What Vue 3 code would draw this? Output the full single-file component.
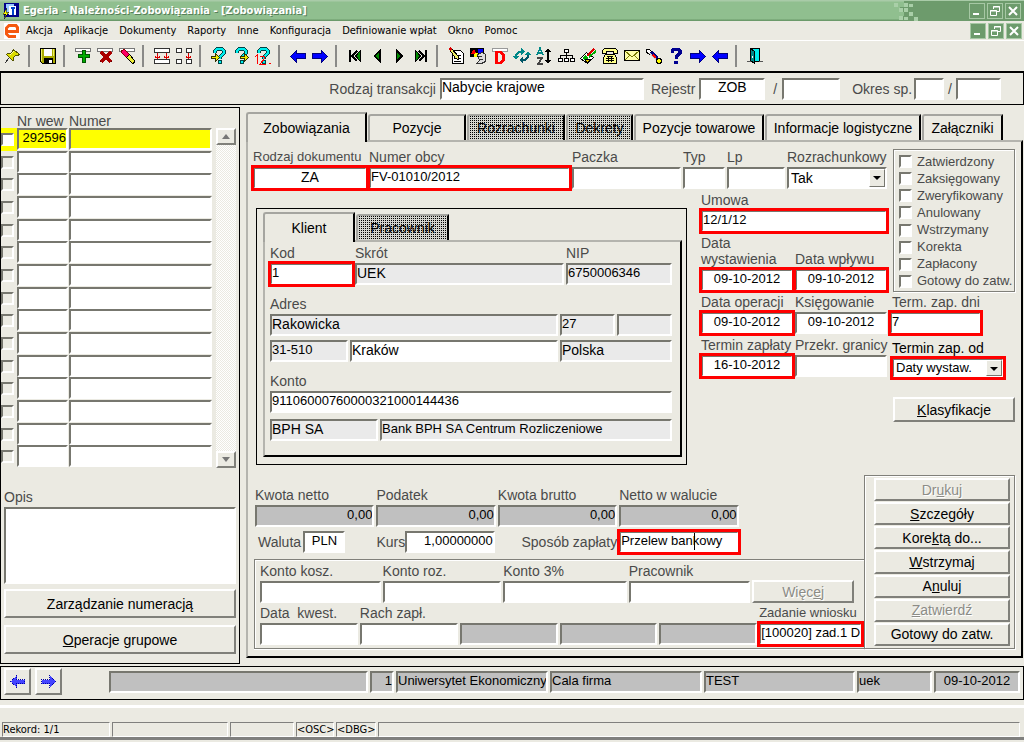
<script setup>
import { ref } from 'vue'

const menu = ['Akcja', 'Aplikacje', 'Dokumenty', 'Raporty', 'Inne', 'Konfiguracja', 'Definiowanie wpłat', 'Okno', 'Pomoc']

const arrowL = '<path fill="#00f" stroke="#000080" d="M1.5 9.5 7.5 3.5v3h9v5h-9v4z"/>'
const arrowR = '<path fill="#00f" stroke="#000080" d="M16.500 9.500 10.500 3.500v3h-9v5h9v4z"/>'
const slot = '<path fill="#fff" stroke="#777" d="M1.500 1.500h15v3h-15z"/>'
const query = '<path fill="none" stroke="#044" stroke-width="4" d="M5 6V4l2-2h5l2 2v2l-4 4v2"/><path fill="none" stroke="#0ee" stroke-width="2.500" d="M5 6V4l2-2h5l2 2v2l-4 4v2"/><path fill="#0ee" stroke="#044" d="M8.500 13.500h3v3h-3z"/>'

const groups = [
  [{ n: 'Przypnij', s: '<path fill="#dd0" stroke="#550" d="M9.500 2.500l6 5-2 1-2 0-2 2 0 3-1 0-6-6 1-1h3l2-2z"/><path stroke="#333" d="M5 11l-4 5"/><path stroke="#ffa" d="M6 8l4-4"/>' }],
  [{ n: 'Zapisz', s: '<path fill="#aa0" stroke="#000" d="M1.500 1.500h15v15h-13l-2-2z"/><path fill="#fff" d="M5 2h8v7H5z"/><path fill="#000" d="M5 11h9v6H5z"/><path fill="#fff" d="M10 13h3v3h-3z"/><path stroke="#ee6" d="M2.500 2v12M14.500 2v7"/>' }],
  [
    { n: 'Dodaj', s: slot + '<path fill="#0a0" stroke="#050" d="M8.500 3.500h3v4h4v3h-4v5h-3v-5h-4v-3h4z"/>' },
    { n: 'Usuń', s: slot + '<path stroke="#a00" stroke-width="3" d="M5 5l10 10M15 5L5 15"/><path stroke="#500" d="M5 15l-1-1M15 15l1-1"/>' },
    { n: 'Wyczyść', s: slot + '<path fill="#f06" stroke="#800" d="M3.500 3.500l3-1 5 5-3 3-5-5z"/><path fill="#ee3" stroke="#000" d="M11.500 7.500l5 6v2l-2 1-6-6z"/>' },
  ],
  [
    { n: 'Wprowadź zapytanie', s: '<path fill="#fff" stroke="#333" d="M1.500 1.500h15v4h-15zM1.500 12.500h15v4h-15z"/><path fill="none" stroke="#d00" d="M4.500 6v6M13.500 6v6M2 9.500l2.500 2 2.500-2M11 9.500l2.500 2 2.500-2"/>' },
    { n: 'Powiel pole', s: '<path fill="#fff" stroke="#333" d="M1.500 1.500h5v4h-5zM11.500 1.500h5v4h-5zM1.500 12.500h5v4h-5zM11.500 12.500h5v4h-5z"/><path fill="none" stroke="#d00" d="M13.500 6v6M11 9.500l2.500 2 2.500-2"/>' },
  ],
  [
    { n: 'Pytaj', s: query + '<path fill="#ee0" stroke="#330" d="M1.500 9.500h4v-3l4 4-4 4v-3h-4z"/>' },
    { n: 'Wykonaj', s: query + '<path fill="#ee0" stroke="#330" d="M8.500 9.500h4v-3l4 4-4 4v-3h-4z"/>' },
    { n: 'Policz', s: query + '<path fill="none" stroke="#f00" d="M1 10l2-2v9M6 10l2-1h2l1 2-5 6h6M15 16h2"/>' },
  ],
  [{ n: 'Wstecz', s: arrowL }, { n: 'Naprzód', s: arrowR }],
  [
    { n: 'Pierwszy', s: '<path fill="none" stroke="#000" stroke-width="2" d="M4 3v12M11 4L6 9l5 5"/><path fill="#080" stroke="#000" d="M14.500 3.500v11l-5-5.500z"/>' },
    { n: 'Poprzedni', s: '<path fill="#080" stroke="#000" stroke-width="1.500" d="M12 3.500v11L6.500 9z"/>' },
    { n: 'Następny', s: '<path fill="#080" stroke="#000" stroke-width="1.500" d="M6.500 3.500v11L12 9z"/>' },
    { n: 'Ostatni', s: '<path fill="none" stroke="#000" stroke-width="2" d="M14 3v12M7 4l5 5-5 5"/><path fill="#080" stroke="#000" d="M3.500 3.500v11l5-5.500z"/>' },
  ],
  [
    { n: 'Edytuj', s: '<path fill="#fff" stroke="#000" d="M5.500 3.500h8l3 3v10h-11z"/><path stroke="#000" d="M7 11.500h7M9 8.500h5M7 14.500h7"/><path fill="#ee6" stroke="#000" d="M2.500 2.500l2-1 7 8v3l-3-1z"/><path fill="#d00" d="M1 2l2-2 2 2-2 2z"/>' },
    { n: 'Kształty', s: '<path fill="#000" d="M1 1h14v9H1z"/><path fill="#00f" d="M9 2h5v4H9z"/><path fill="#f00" d="M2 7l3-5 3 5z"/><circle fill="#ff0" cx="7" cy="8" r="2"/><path fill="#ddd" stroke="#333" d="M8.500 7.500l5-2 3 2v7l-4 2h-5l3-3z"/><path stroke="#333" d="M10 10l3-1M11 13l3-1"/>' },
    { n: 'Dekret', s: '<path fill="#fff" stroke="#999" d="M1.500 1.500h15v3h-15z"/><path fill="none" stroke="#f00" stroke-width="2.500" d="M5.500 5h4l3 3v5l-3 3h-4z"/>' },
    { n: 'Odśwież', s: '<path fill="none" stroke="#088" stroke-width="2" d="M3 12V8l3-3h3"/><path fill="#088" d="M8 1v7l4-4z"/><path fill="none" stroke="#056" stroke-width="2" d="M15 6v4l-3 3H9"/><path fill="#056" d="M10 10v7l-4-4z"/><path fill="#088" d="M0 9h6l-3 4zM12 8h6l-3-4z"/>' },
    { n: 'Sortuj', s: '<path fill="none" stroke="#088" stroke-width="1.500" d="M2 8l3-7 3 7M3 6h4"/><path fill="none" stroke="#444" stroke-width="1.500" d="M2 11h5l-4 6h5"/><path stroke="#000" stroke-width="1.500" d="M13 2v14"/><path d="M10 5l3-4 3 4zM10 13l3 4 3-4z"/>' },
    { n: 'Drzewo', s: '<path fill="#fff" stroke="#000" d="M7.500 2.500h4v3h-4zM1.500 11.500h4v3h-4zM7.500 11.500h4v3h-4zM13.500 11.500h4v3h-4z"/><path fill="none" stroke="#000" d="M9.500 6v5M3.500 11V8.500h12V11"/>' },
    { n: 'Podpisz', s: '<path fill="#fff" stroke="#000" d="M1.500 11.500l6-6 7 5-6 6z"/><path fill="#0a0" d="M3 11l3-3 3 3-3 3z"/><path fill="#ec0" stroke="#000" d="M6 13l3-1 3 1-4 3z"/><path stroke="#d00" stroke-width="2" d="M8 9l7-7"/><path stroke="#0a0" stroke-width="2" d="M10 10l7-6"/>' },
    { n: 'Telefon', s: '<path fill="#ff8" stroke="#000" d="M1.500 6.500v-3l2-2h11l2 2v3h-4v-2h-7v2zM4.500 7.500h9l2 3v6h-13v-6z"/><path fill="none" stroke="#000" d="M6 9.500h6M5 11.500h8M5 13.500h8M7.500 9v6M10.500 9v6"/>' },
    { n: 'Poczta', s: '<path fill="#ffa" stroke="#000" d="M1.500 3.500h15v10h-15z"/><path fill="none" stroke="#770" d="M2 4l7 6 7-6M2 13l5-5M16 13l-5-5"/>' },
    { n: 'Kolory', s: '<path fill="#fff" stroke="#000" d="M1.500 2.500h3l3 3-2 2-4-2z"/><path stroke="#000080" stroke-width="4" d="M6 5l7 8"/><path stroke="#ccc" stroke-width="1.500" d="M5 6l7 8"/><path stroke="#f00" stroke-width="2" d="M8 8l3 3"/><path stroke="#000" stroke-width="4" d="M14 11v6M11 14h6"/><path stroke="#ff0" stroke-width="2" d="M14 12v4M12 14h4"/>' },
    { n: 'Pomoc', s: '<path fill="none" stroke="#000090" stroke-width="3" d="M5 6V3.500L7 2h4l2 2v2l-4 4v2"/><path fill="#000090" d="M7 14h4v3H7z"/>' },
    { n: 'Dalej', s: arrowR },
    { n: 'Cofnij', s: arrowL },
  ],
  [{ n: 'Wyjście', s: '<path fill="#0ee" stroke="#000" d="M4.500 1.500h9v13h-9z"/><path fill="#088" stroke="#000" d="M4.500 1.500l4 3v12l-4-3z"/><path fill="#fff" d="M6 9h1v2H6z"/><path stroke="#555" d="M1 14.500h4M13 14.500h4"/>' }],
]

const tabs = [
  { t: 'Zobowiązania', c: 'w1 active' }, { t: 'Pozycje', c: 'w2' }, { t: 'Rozrachunki', c: 'w3 off' },
  { t: 'Dekrety', c: 'w4 off' }, { t: 'Pozycje towarowe', c: 'w5' }, { t: 'Informacje logistyczne', c: 'w6' }, { t: 'Załączniki', c: 'w7' },
]
const flags = ['Zatwierdzony', 'Zaksięgowany', 'Zweryfikowany', 'Anulowany', 'Wstrzymany', 'Korekta', 'Zapłacony', 'Gotowy do zatw.']
const amounts = ['Kwota netto', 'Podatek', 'Kwota brutto', 'Netto w walucie']
const actions = [
  ['Dr', 'u', 'kuj', true], ['', 'S', 'zczegóły'], ['Kore', 'k', 'tą do...'], ['', 'W', 'strzymaj'],
  ['A', 'n', 'uluj'], ['', 'Z', 'atwierdź', true], ['Gotowy do zatw.', '', ''],
]
const rows = Array.from({ length: 15 }, (_, i) => ({ nr: i === 0 ? '292596' : '', numer: '' }))
const opis = ref('')
</script>

<template>
  <div class="app">
    <header class="title">
      <svg class="appicon" viewBox="0 0 16 16" shape-rendering="crispEdges">
        <path fill="#008" d="M1 0h15v14H1z" /><path fill="#9cf" d="M3 1h8v10H3z" /><path fill="#fff" d="M6 3h7v9H6z" />
        <path fill="#04c" d="M8 4h4v2H8zM9 6h2v6H9z" /><path fill="#ff0" stroke="#000" stroke-width=".5" d="M4 5L0 11h3l-2 5 5-7H3z" />
      </svg>
      <h1>Egeria - Należności-Zobowiązania - [Zobowiązania]</h1>
      <svg class="pixels" viewBox="0 0 26 20" shape-rendering="crispEdges">
        <path fill="#6d9b6c" d="M10 0h16v20H10zM6 6h4v5H6zM6 15h4v5H6z" />
        <path fill="#a9cfa8" d="M0 2h4v4H0zM5 7h4v4H5zM10 2h4v4h-4zM15 3h4v3h-4zM10 7h4v4h-4zM15 11h4v4h-4zM5 15h4v4H5zM10 16h4v3h-4zM20 16h4v4h-4z" />
      </svg>
      <div class="winbtns">
        <button aria-label="Minimalizuj"><svg viewBox="0 0 14 14"><path fill="#fff" d="M3 9h6v2H3z" /></svg></button>
        <button aria-label="Przywróć"><svg viewBox="0 0 14 14"><path fill="none" stroke="#fff" d="M5.500 5V2.500h6v5H9M2.500 6.500h6v5h-6zM5 3h7M2 7h7" /></svg></button>
        <button aria-label="Zamknij"><svg viewBox="0 0 14 14"><path stroke="#fff" stroke-width="2" d="M3 3l8 8M11 3l-8 8" /></svg></button>
      </div>
    </header>

    <nav class="menu">
      <svg class="logo" viewBox="0 0 16 16"><path fill="#fff" d="M0 0h16v16H0z" /><path fill="none" stroke="#f5590f" stroke-width="3" d="M3 8.500h10.500V4.500L12 2.500H5L2.500 5v6L5 13.500h7" /></svg>
      <a v-for="m in menu" :key="m" href="#">{{ m }}</a>
      <div class="winbtns">
        <button aria-label="Minimalizuj okno"><svg viewBox="0 0 14 14"><path fill="#fff" d="M3 9h6v2H3z" /></svg></button>
        <button aria-label="Przywróć okno"><svg viewBox="0 0 14 14"><path fill="none" stroke="#fff" d="M5.500 5V2.500h6v5H9M2.500 6.500h6v5h-6zM5 3h7M2 7h7" /></svg></button>
        <button aria-label="Zamknij okno"><svg viewBox="0 0 14 14"><path stroke="#fff" stroke-width="2" d="M3 3l8 8M11 3l-8 8" /></svg></button>
      </div>
    </nav>

    <div class="toolbar">
      <div v-for="(g, i) in groups" :key="i" class="tgroup">
        <button v-for="b in g" :key="b.n" :aria-label="b.n"><svg viewBox="0 0 18 18" shape-rendering="crispEdges" v-html="b.s"></svg></button>
      </div>
    </div>

    <section class="trans">
      <label for="rt">Rodzaj transakcji</label><input id="rt" class="i tx" value="Nabycie krajowe">
      <label for="rej">Rejestr</label><input id="rej" class="i tx c rej" value="ZOB">
      <span>/</span><input class="i rej2" aria-label="Rejestr numer">
      <label for="okr" class="okr">Okres sp.</label><input id="okr" class="i ok1">
      <span class="tight">/</span><input class="i ok2" aria-label="Okres rok">
    </section>

    <main>
      <aside>
        <div class="list">
          <table>
            <thead><tr><th></th><th>Nr wew</th><th>Numer</th></tr></thead>
            <tbody>
              <tr v-for="(r, i) in rows" :key="i" :class="{ sel: i === 0 }">
                <td class="ck"><input type="checkbox" class="cb" :aria-label="'Wiersz ' + (i + 1)"></td>
                <td class="nr"><input class="i r" :value="r.nr" aria-label="Nr wew"></td>
                <td><input class="i" :value="r.numer" aria-label="Numer"></td>
              </tr>
            </tbody>
          </table>
          <div class="scroll">
            <button class="b" aria-label="W górę"><svg viewBox="0 0 8 5"><path fill="#777" d="M4 0l4 5H0z" /></svg></button>
            <button class="b" aria-label="W dół"><svg viewBox="0 0 8 5"><path fill="#777" d="M0 0h8L4 5z" /></svg></button>
          </div>
        </div>
        <label for="opis" class="opis">Opis</label>
        <textarea id="opis" v-model="opis" class="i"></textarea>
        <button class="b big">Zarządzanie numeracją</button>
        <button class="b big"><u>O</u>peracje grupowe</button>
      </aside>

      <section class="right">
        <div class="tabs"><button v-for="t in tabs" :key="t.t" class="tab" :class="t.c">{{ t.t }}</button></div>
        <div class="panel">
          <div class="top">
            <div class="topleft">
              <div class="row1">
                <div class="f"><label for="rd" class="sm">Rodzaj dokumentu</label><input id="rd" class="i c tx req" value="ZA"></div>
                <div class="f"><label for="no">Numer obcy</label><input id="no" class="i req" value="FV-01010/2012"></div>
                <div class="f"><label for="pa">Paczka</label><input id="pa" class="i"></div>
                <div class="f"><label for="ty">Typ</label><input id="ty" class="i"></div>
                <div class="f"><label for="lp">Lp</label><input id="lp" class="i"></div>
                <div class="f"><label for="ro">Rozrachunkowy</label>
                  <div class="sel-wrap"><select id="ro" class="i tx"><option>Tak</option></select><span class="arr"></span></div>
                </div>
              </div>
              <div class="mid">
                <div class="client">
                  <div class="tabs sub"><button class="tab active k1">Klient</button><button class="tab off k2">Pracownik</button></div>
                  <div class="panel cp">
                    <div class="g1">
                      <div class="f"><label for="kod">Kod</label><input id="kod" class="i req" value="1"></div>
                      <div class="f"><label for="skr">Skrót</label><input id="skr" class="i tx g" value="UEK" readonly></div>
                      <div class="f"><label for="nip">NIP</label><input id="nip" class="i g" value="6750006346" readonly></div>
                    </div>
                    <label for="adr" class="lab">Adres</label>
                    <div class="g2">
                      <input id="adr" class="i tx g" value="Rakowicka" readonly><input class="i g" value="27" aria-label="Nr domu" readonly><input class="i g" aria-label="Nr lokalu" readonly>
                    </div>
                    <div class="g3">
                      <input class="i g" value="31-510" aria-label="Kod pocztowy" readonly><input class="i tx" value="Kraków" aria-label="Miasto"><input class="i tx g" value="Polska" aria-label="Kraj" readonly>
                    </div>
                    <label for="kon" class="lab">Konto</label>
                    <input id="kon" class="i" value="91106000760000321000144436">
                    <div class="g4"><input class="i tx g" value="BPH SA" aria-label="Bank" readonly><input class="i g" value="Bank BPH SA Centrum Rozliczeniowe" aria-label="Nazwa banku" readonly></div>
                  </div>
                </div>
                <div class="dates">
                  <div class="f wide"><label for="um">Umowa</label><input id="um" class="i req" value="12/1/12"></div>
                  <div class="f"><label for="dw">Data<br>wystawienia</label><input id="dw" class="i c req" value="09-10-2012"></div>
                  <div class="f"><label for="dp">Data wpływu</label><input id="dp" class="i c req" value="09-10-2012"></div>
                  <div class="f"><label for="do">Data operacji</label><input id="do" class="i c req" value="09-10-2012"></div>
                  <div class="f"><label for="ks">Księgowanie</label><input id="ks" class="i c" value="09-10-2012"></div>
                  <div class="f"><label for="tz">Termin zapłaty</label><input id="tz" class="i c req" value="16-10-2012"></div>
                  <div class="f"><label for="pg">Przekr. granicy</label><input id="pg" class="i c"></div>
                </div>
              </div>
            </div>
            <div class="topright">
              <div class="flags"><label v-for="f in flags" :key="f"><input type="checkbox" class="cb">{{ f }}</label></div>
              <div class="f dni"><label for="td">Term. zap. dni</label><input id="td" class="i req" value="7"></div>
              <div class="f od"><label for="to">Termin zap. od</label>
                <div class="sel-wrap"><select id="to" class="i req"><option>Daty wystaw.</option></select><span class="arr"></span></div>
              </div>
              <button class="b klas"><u>K</u>lasyfikacje</button>
            </div>
          </div>

          <div class="bottom">
            <div class="bleft">
              <div class="money">
                <div v-for="(a, i) in amounts" :key="a" class="f"><label :for="'am' + i">{{ a }}</label><input :id="'am' + i" class="i r dk" value="0,00" readonly></div>
              </div>
              <div class="money second">
                <div class="in"><label for="wal">Waluta</label><input id="wal" class="i c wal" value="PLN"></div>
                <div class="in"><label for="kur">Kurs</label><input id="kur" class="i r kurs" value="1,00000000"></div>
                <label for="spo" class="spo">Sposób zapłaty</label>
                <div class="caretbox"><input id="spo" class="i req" value="Przelew bankowy"><i class="caret"></i></div>
              </div>
              <div class="group">
                <div class="q1">
                  <div class="f"><label for="kk">Konto kosz.</label><input id="kk" class="i"></div>
                  <div class="f"><label for="kr">Konto roz.</label><input id="kr" class="i"></div>
                  <div class="f"><label for="k3">Konto 3%</label><input id="k3" class="i"></div>
                  <div class="f"><label for="pr">Pracownik</label><input id="pr" class="i"></div>
                  <button class="b" disabled>Więc<u>e</u>j</button>
                </div>
                <div class="q2">
                  <div class="f"><label for="dk">Data&nbsp; kwest.</label><input id="dk" class="i"></div>
                  <div class="f"><label for="rz">Rach zapł.</label><input id="rz" class="i"></div>
                  <input v-for="n in 3" :key="n" class="i dk" :aria-label="'Pole ' + n" readonly>
                  <div class="f"><label for="zw" class="sm">Zadanie wniosku</label><input id="zw" class="i req" value="[100020] zad.1 D"></div>
                </div>
              </div>
            </div>
            <div class="actions">
              <button v-for="a in actions" :key="a[2] + a[0]" class="b" :disabled="a[3]">{{ a[0] }}<u>{{ a[1] }}</u>{{ a[2] }}</button>
            </div>
          </div>
        </div>
      </section>
    </main>

    <section class="foot">
      <button class="b" aria-label="Poprzedni formularz"><svg viewBox="0 0 15 13" shape-rendering="crispEdges"><path fill="#44f" stroke="#00a" stroke-dasharray="1 1" d="M.5 6.500l6-6v4h8v4h-8v4z" /></svg></button>
      <button class="b" aria-label="Następny formularz"><svg viewBox="0 0 15 13" shape-rendering="crispEdges"><path fill="#44f" stroke="#00a" stroke-dasharray="1 1" d="M14.500 6.500l-6-6v4h-8v4h8v4z" /></svg></button>
      <div class="ff">
        <input class="i dk" aria-label="Komunikat" readonly><input class="i dk r" value="1" aria-label="Numer firmy" readonly>
        <input class="i dk" value="Uniwersytet Ekonomiczny" aria-label="Firma" readonly><input class="i dk" value="Cala firma" aria-label="Oddział" readonly>
        <input class="i dk" value="TEST" aria-label="Baza" readonly><input class="i dk" value="uek" aria-label="Użytkownik" readonly>
        <input class="i dk c" value="09-10-2012" aria-label="Data" readonly>
      </div>
    </section>

    <footer class="status"><span>Rekord: 1/1</span><span></span><span></span><span>&lt;OSC&gt;</span><span>&lt;DBG&gt;</span><span></span></footer>
    <div class="edge"><i></i><i></i></div>
  </div>
</template>

<style>
html, body { background: #ebeae2; }
</style>

<style scoped>
* { box-sizing: border-box; }
.app { min-height: 100vh; min-width: 960px; display: flex; flex-direction: column; background: #ebeae2; color: #000; font: 14px/16px "Liberation Sans", Arial, sans-serif; overflow: hidden; }
button, input, select, textarea { font: inherit; color: inherit; border-radius: 0; margin: 0; outline: none; }
label { color: #4a4a4a; white-space: nowrap; }
.sm { font-size: 13px; }

.title { height: 21px; display: flex; align-items: center; background: linear-gradient(#a9cba8 0 1px, #90bf8f 2px 19px, #6b9a6a 20px); padding-left: 3px; flex: none; }
.appicon { width: 16px; height: 16px; }
.title h1 { margin: 0 auto 0 4px; font: bold 11px/16px "DejaVu Sans Condensed", "DejaVu Sans", sans-serif; color: #fff; text-shadow: 1px 1px #56805a; white-space: nowrap; }
.pixels { width: 26px; height: 20px; }
.title .winbtns { background: #6d9b6c; height: 20px; padding: 2px 3px 0 49px; }
.winbtns { display: flex; gap: 2px; padding-right: 2px; }
.winbtns button { width: 16px; height: 16px; padding: 0; border: 1px solid #a6c8a4; background: #6d9b6c; display: block; }
.winbtns svg { display: block; width: 14px; height: 14px; }

.menu { height: 20px; display: flex; align-items: center; border-bottom: 1px solid #fff; padding-left: 4px; font: 11px/16px "DejaVu Sans Condensed", "DejaVu Sans", sans-serif; flex: none; }
.menu a { color: #000; text-decoration: none; margin-right: 11px; white-space: nowrap; }
.logo { width: 16px; height: 16px; margin-right: 6px; }
.menu .winbtns { margin-left: auto; }

.toolbar { height: 30px; display: flex; align-items: center; padding-left: 2px; flex: none; }
.tgroup { display: flex; }
.tgroup + .tgroup { margin-left: 4px; padding-left: 7px; border-left: 2px solid; border-image: linear-gradient(90deg, #8a8a88 50%, #fff 50%) 1; }
.tgroup button { width: 22px; height: 22px; padding: 2px; border: 0; background: none; }
.tgroup svg { display: block; width: 18px; height: 18px; }

.i { width: 100%; height: 22px; min-width: 0; padding: 0 0 3px; border: 2px solid; border-color: #77776f #fff #fff #77776f; background: #fff; font-size: 13px; color: #000; display: block; }
.tx { font-size: 14px; }
.c { text-align: center; }
.r { text-align: right; }
.g { background: #eaeaea; }
.dk { background: #c0c0c0; }
.req { outline: 3px solid #f00; outline-offset: -1px; }
.b { border: 2px solid; border-color: #fff #80807a #80807a #fff; background: #ebeae2; padding: 0; text-align: center; white-space: nowrap; }
.b:disabled { color: #8c8c86; text-shadow: 1px 1px #fff; }
.cb { appearance: none; width: 13px; height: 13px; border: 2px solid; border-color: #77776f #fff #fff #77776f; background: #fff; flex: none; }

.trans { display: flex; align-items: center; justify-content: flex-end; border: 1px solid #000; border-top-width: 2px; height: 34px; padding-right: 22px; flex: none; }
.trans label { margin: 0 4px 0 7px; }
.trans .i { width: 204px; }
.trans .rej { width: 66px; }
.trans .rej2 { width: 58px; }
.trans .ok1 { width: 30px; }
.trans .ok2 { width: 45px; }
.trans span { margin: 0 5px 0 8px; color: #4a4a4a; }
.trans .tight { margin: 0 4px; }
.trans .okr { margin: 0 2px 0 12px; }

main { display: grid; grid-template-columns: 240px minmax(0, 1fr); margin-top: 2px; flex: 1; gap: 6px; }
aside { border: 1px solid #000; padding: 5px 3px 9px 0; display: flex; flex-direction: column; align-items: stretch; }
.list { display: flex; justify-content: space-between; }
table { border-collapse: separate; border-spacing: 0; width: 211px; height: 355px; table-layout: fixed; }
th { font-weight: normal; color: #4a4a4a; text-align: left; padding: 0; height: 15px; line-height: 14px; }
th:first-child { width: 16px; }
th:nth-child(2) { width: 52px; }
td { padding: 0; vertical-align: top; }
.nr { padding-right: 1px; }
.ck { padding-top: 5px; }
.ck .cb { display: block; background: transparent; }
.sel .ck { background: #ff0; }
.sel .ck .cb { background: #fff; }
.sel .i { background: #ff0; }
.scroll { width: 20px; height: 340px; margin-top: 15px; display: flex; flex-direction: column; justify-content: space-between; background: conic-gradient(#fff 25%, #ebeae2 0 50%, #fff 0 75%, #ebeae2 0) 0 0 / 2px 2px; }
.scroll .b { width: 20px; height: 17px; display: flex; align-items: center; justify-content: center; }
.scroll svg { width: 8px; height: 5px; }
.opis { margin: 21px 3px 2px; }
textarea.i { height: auto; flex: 1; width: auto; margin-left: 3px; resize: none; }
.big { height: 29px; margin: 5px 0 0 3px; }
.big + .big { margin-top: 7px; }

.right { display: flex; flex-direction: column; padding-top: 5px; }
.tabs { display: flex; align-items: flex-end; height: 28px; }
.tab { height: 26px; padding: 0; border: 0; border-top: 2px solid #a5a5a0; border-left: 2px solid #a5a5a0; border-right: 2px solid #000; background: #ebeae2; margin-left: 1px; white-space: nowrap; border-radius: 3px 0 0 0; }
.tab.active { height: 30px; margin: 0 0 -2px; position: relative; }
.tab.off { background: conic-gradient(#000 25%, #d4d4ce 0) 0 0 / 2px 2px; }
.w1 { width: 121px; } .w2 { width: 98px; } .w3 { width: 98px; } .w4 { width: 67px; } .w5 { width: 130px; } .w6 { width: 156px; } .w7 { width: 81px; }
.panel { border: 2px solid; border-color: #b4b4ae #000 #000 #b4b4ae; flex: 1; }
.right > .panel { margin-right: 1px; padding-bottom: 7px; display: flex; flex-direction: column; justify-content: space-between; margin-bottom: 6px; }

.top { display: flex; }
.topleft { flex: 1; min-width: 0; padding: 7px 0 0 5px; }
.f { display: flex; flex-direction: column; justify-content: flex-end; gap: 2px; min-width: 0; }
.row1 { display: grid; gap: 2px; grid-template-columns: minmax(0, 114fr) minmax(0, 201fr) minmax(0, 109fr) minmax(0, 42fr) minmax(0, 58fr) minmax(0, 100fr); }
.sel-wrap { position: relative; }
select.i { appearance: none; padding-left: 2px; padding-bottom: 0; }
.arr { position: absolute; top: 2px; right: 2px; bottom: 2px; width: 16px; background: #ebeae2; border: 1px solid; border-color: #fff #77776f #77776f #fff; pointer-events: none; }
.arr::after { content: ""; position: absolute; left: 3px; top: 6px; border: 4px solid transparent; border-top-color: #000; border-bottom: 0; }
.mid { display: grid; grid-template-columns: minmax(0, 431fr) minmax(0, 186fr); column-gap: 14px; padding-left: 3px; }
.client { border: 1px solid #000; margin-top: 19px; padding: 4px 4px 7px 6px; }
.sub { height: 27px; }
.k1 { width: 92px; } .k2 { width: 93px; }
.cp { padding: 3px 8px 14px 5px; }
.cp .lab { display: block; margin: 11px 0 2px; }
.g1, .g2, .g3, .g4 { display: grid; gap: 2px; }
.g1 { grid-template-columns: minmax(0, 83fr) minmax(0, 209fr) minmax(0, 106fr); }
.g2 { grid-template-columns: minmax(0, 288fr) minmax(0, 55fr) minmax(0, 55fr); }
.g3 { grid-template-columns: minmax(0, 78fr) minmax(0, 208fr) minmax(0, 112fr); margin-top: 4px; }
.g4 { grid-template-columns: minmax(0, 108fr) minmax(0, 292fr); margin-top: 6px; }
.dates { display: grid; grid-template-columns: minmax(0, 1fr) minmax(0, 1fr); column-gap: 2px; row-gap: 3px; align-content: start; margin-top: 3px; }
.wide { grid-column: 1 / -1; }

.topright { width: 134px; flex: none; padding: 7px 6px 0; }
.flags { border: 1px solid #80807a; box-shadow: 1px 1px #fff, inset 1px 1px #fff; height: 143px; display: flex; flex-direction: column; padding: 3px 0 1px 5px; }
.flags label { flex: 1; display: flex; align-items: center; gap: 5px; font-size: 13px; }
.dni { width: 91px; margin: 2px 0 0 -3px; }
.dni label, .od label { margin-left: 2px; }
.od label { margin-left: 0; }
.od { margin: 6px 1px 0 -1px; width: 112px; }
.od label { color: #000; }
.od .i { height: 20px; }
.klas { width: 100%; height: 25px; margin-top: 19px; display: block; }

.bottom { display: flex; padding: 0 6px; margin-top: 10px; }
.bleft { flex: 1; min-width: 0; padding-top: 12px; }
.money { display: grid; gap: 2px; padding-left: 1px; grid-template-columns: repeat(4, minmax(0, 120fr)) minmax(0, 124fr); }
.second { margin-top: 4px; align-items: center; }
.in { display: flex; align-items: center; justify-content: space-between; padding-right: 1px; }
.in:first-child { padding: 0 29px 0 3px; }
.in .wal { width: 42px; } .in .kurs { width: 91px; }
.spo { text-align: right; }
.caretbox { position: relative; }
.caret { position: absolute; left: 75px; top: 2px; width: 1px; height: 17px; background: #000; }
.group { border: 1px solid #80807a; border-right: 0; box-shadow: inset 1px 1px #fff, 0 1px #fff; margin-top: 6px; padding: 3px 2px 3px 5px; }
.q1, .q2 { display: grid; gap: 2px; align-items: end; }
.q1 { grid-template-columns: minmax(0, 121fr) minmax(0, 119fr) minmax(0, 124fr) minmax(0, 122fr) minmax(0, 102fr) minmax(0, 6fr); }
.q1 .b { height: 23px; }
.q2 { grid-template-columns: repeat(5, minmax(0, 98fr)) minmax(0, 103fr); margin-top: 2px; }
.actions { width: 151px; border: 1px solid #80807a; box-shadow: inset 1px 1px #fff, 1px 1px #fff; padding: 2px 4px 2px 9px; display: flex; flex-direction: column; gap: 1px; }
.actions .b { flex: 1; line-height: 14px; }

.foot { border: 1px solid #000; height: 34px; display: flex; align-items: center; padding: 0 3px 3px; gap: 4px; margin-top: 2px; flex: none; }
.foot > .b { width: 27px; height: 27px; flex: none; display: flex; align-items: center; justify-content: center; }
.foot svg { width: 15px; height: 13px; }
.ff { flex: 1; margin-left: 43px; display: grid; gap: 2px; grid-template-columns: minmax(0, 259fr) minmax(0, 24fr) minmax(0, 152fr) minmax(0, 152fr) minmax(0, 151fr) minmax(0, 75fr) minmax(0, 86fr); }

.status { margin-top: 5px; border-top: 3px solid #fff; border-bottom: 3px solid #80807e; padding: 14px 4px 0 2px; display: grid; gap: 2px; grid-template-columns: 108px 116px 64px 38px 40px minmax(0, 1fr); font: 11px/14px "DejaVu Sans Condensed", "DejaVu Sans", sans-serif; flex: none; }
.status span { height: 15px; border: 1px solid; border-color: #80807e #fff #fff #80807e; white-space: nowrap; }
.edge { display: flex; justify-content: space-between; padding-top: 2px; height: 3px; flex: none; }
.edge i { width: 65px; height: 1px; background: #80807e; margin-left: 4px; }
.edge i + i { width: 230px; background: #c4c4b4; }
</style>
